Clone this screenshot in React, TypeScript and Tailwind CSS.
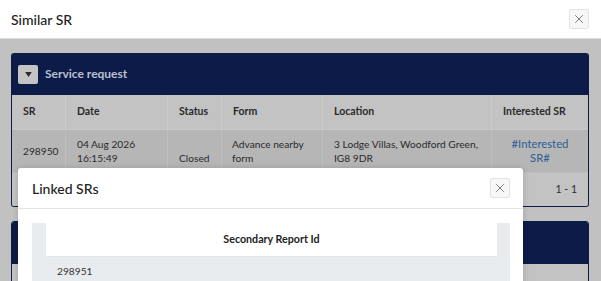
import { X } from "lucide-react";

/* ========= Datos ========= */
type Col = { key: string; label: string; w: string };

const COLS: Col[] = [
  { key: "sr", label: "SR", w: "w-[54px]" },
  { key: "date", label: "Date", w: "w-[102px]" },
  { key: "status", label: "Status", w: "w-[54px]" },
  { key: "form", label: "Form", w: "w-[101px]" },
  { key: "location", label: "Location", w: "w-[169px]" },
  { key: "interested", label: "Interested SR", w: "flex-1" },
];

/* ========= UI: botón cerrar ========= */
function CloseButton() {
  return (
    <button className="flex h-[20px] w-[20px] items-center justify-center rounded-[2px] border border-[#e3e3e3] bg-[#f7f7f7] text-[#555]">
      <X className="size-[14px]" strokeWidth={1.3} />
    </button>
  );
}

/* ========= UI: cabecera navy del panel ========= */
function PanelHeader({ title }: { title: string }) {
  return (
    <div className="flex h-[42px] items-center gap-[7px] bg-[#0c1b47] pl-[6px]">
      <span className="flex h-[19px] w-[20px] items-center justify-center rounded-[2px] bg-[#c4c4c4]">
        <svg width="7" height="5" viewBox="0 0 8 6">
          <path d="M0 0 L8 0 L4 6 Z" fill="#2b2b2b" />
        </svg>
      </span>
      <span className="text-[12px] font-bold text-[#b9c0cf]">{title}</span>
    </div>
  );
}

/* ========= Tabla de fondo (atenuada) ========= */
function ServiceTable() {
  return (
    <div className="whitespace-nowrap text-[10.2px] text-[#2a2a2a]">
      <div className="flex h-[34px] bg-[#c3c3c3] text-[10.5px] font-bold">
        {COLS.map((c, i) => (
          <div
            key={c.key}
            className={[
              "flex items-center px-[11px]",
              c.w,
              i < COLS.length - 1 ? "border-r border-[#cbcbcb]" : "",
            ].join(" ")}
          >
            {c.label}
          </div>
        ))}
      </div>
      <div className="flex h-[43px] border-t border-[#c9c9c9] bg-[#b6b6b6] leading-[14px]">
        <div className="flex w-[54px] items-center border-r border-[#bebebe] px-[11px]">298950</div>
        <div className="w-[102px] border-r border-[#bebebe] px-[11px] pt-[7px]">
          04 Aug 2026
          <br />
          16:15:49
        </div>
        <div className="flex w-[54px] items-end border-r border-[#bebebe] px-[11px] pb-[7px]">Closed</div>
        <div className="w-[101px] border-r border-[#bebebe] px-[10px] pt-[7px]">
          Advance nearby
          <br />
          form
        </div>
        <div className="w-[169px] border-r border-[#bebebe] px-[11px] pt-[7px]">
          3 Lodge Villas, Woodford Green,
          <br />
          IG8 9DR
        </div>
        <div className="flex flex-1 items-center justify-center text-center text-[11.3px] leading-[14px] text-[#2b5d95]">
          #Interested
          <br />
          SR#
        </div>
      </div>
      <div className="flex h-[34px] items-center justify-end border-t border-[#bdbdbd] bg-[#c3c3c3] pr-[11px] text-[10.5px]">
        1 - 1
      </div>
    </div>
  );
}

/* ========= Modal interior ========= */
function LinkedModal() {
  return (
    <div className="absolute left-[18px] top-[168px] w-[505px] rounded-t-[3px] bg-white shadow-[0_0_6px_rgba(0,0,0,0.15)]">
      <div className="flex h-[41px] items-center justify-between border-b border-[#e6e6e6] pl-[14px] pr-[13px]">
        <span className="text-[14px] font-medium text-[#222]">Linked SRs</span>
        <CloseButton />
      </div>
      <div className="px-[14px] pr-[13px] pt-[14px]">
        <div className="bg-[#e9ecef] pl-[14px] pr-[13px]">
          <div className="flex h-[34px] items-center justify-center border-b border-[#e3e5e8] bg-white text-[10.7px] font-bold text-[#222]">
            Secondary Report Id
          </div>
          <div className="flex h-[30px] items-center bg-[#e9ecef] px-[11px] text-[10.2px] text-[#333]">
            298951
          </div>
        </div>
      </div>
    </div>
  );
}

/* ========= Página ========= */
export default function App() {
  return (
    <div
      className="relative h-[281px] w-[601px] overflow-hidden bg-white"
      style={{ fontFamily: "Lato, 'Noto Sans', sans-serif" }}
    >
      <header className="flex h-[39px] items-center justify-between border-b border-[#dcdcdc] pl-[11px] pr-[12px]">
        <h1 className="text-[14px] font-medium text-[#222]">Similar SR</h1>
        <CloseButton />
      </header>

      <main className="h-[242px] bg-[#c1c1c1] pl-[11px] pr-[12px] pt-[14px]">
        <section className="overflow-hidden rounded-[3px] border border-t-0 border-[#0c1b47]">
          <PanelHeader title="Service request" />
          <ServiceTable />
        </section>
        <section className="mt-[14px] overflow-hidden rounded-t-[3px] border border-[#0c1b47]">
          <PanelHeader title="" />
          <div className="h-[40px] bg-[#c3c3c3]" />
        </section>
      </main>

      <LinkedModal />
    </div>
  );
}
